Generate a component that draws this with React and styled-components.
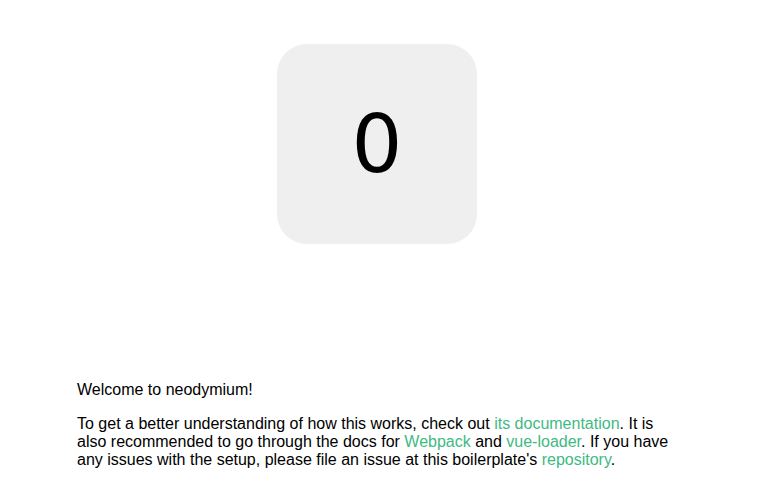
import React from 'react';
import styled, { createGlobalStyle } from 'styled-components';

const GlobalStyle = createGlobalStyle`
  html, body {
    margin: 0;
    padding: 0;
    background: #fff;
  }
`;

const Page = styled.div`
  width: 600px;
  padding: 44px 0 0 77px;
  font-family: "Liberation Sans", Arial, sans-serif;
  font-size: 16px;
  color: #000;
`;

const Counter = styled.div`
  width: 200px;
  height: 200px;
  margin: 0 auto;
  border-radius: 30px;
  background: #efefef;
  display: flex;
  align-items: center;
  justify-content: center;
  font-family: "DejaVu Sans", sans-serif;
  font-size: 80px;
  color: #000;
`;

const Intro = styled.div`
  margin-top: 137px;
`;

const Para = styled.p`
  margin: 0 0 16px;
  line-height: 18px;
`;

const Link = styled.a`
  color: #42b983;
  text-decoration: none;
`;

export default function App() {
  return (
    <>
      <GlobalStyle />
      <Page>
        <Counter>0</Counter>
        <Intro>
          <Para>Welcome to neodymium!</Para>
          <Para>
            To get a better understanding of how this works, check out{' '}
            <Link href="#">its documentation</Link>. It is also recommended to go
            through the docs for <Link href="#">Webpack</Link> and{' '}
            <Link href="#">vue-loader</Link>. If you have any issues with the
            setup, please file an issue at this boilerplate's{' '}
            <Link href="#">repository</Link>.
          </Para>
        </Intro>
      </Page>
    </>
  );
}
